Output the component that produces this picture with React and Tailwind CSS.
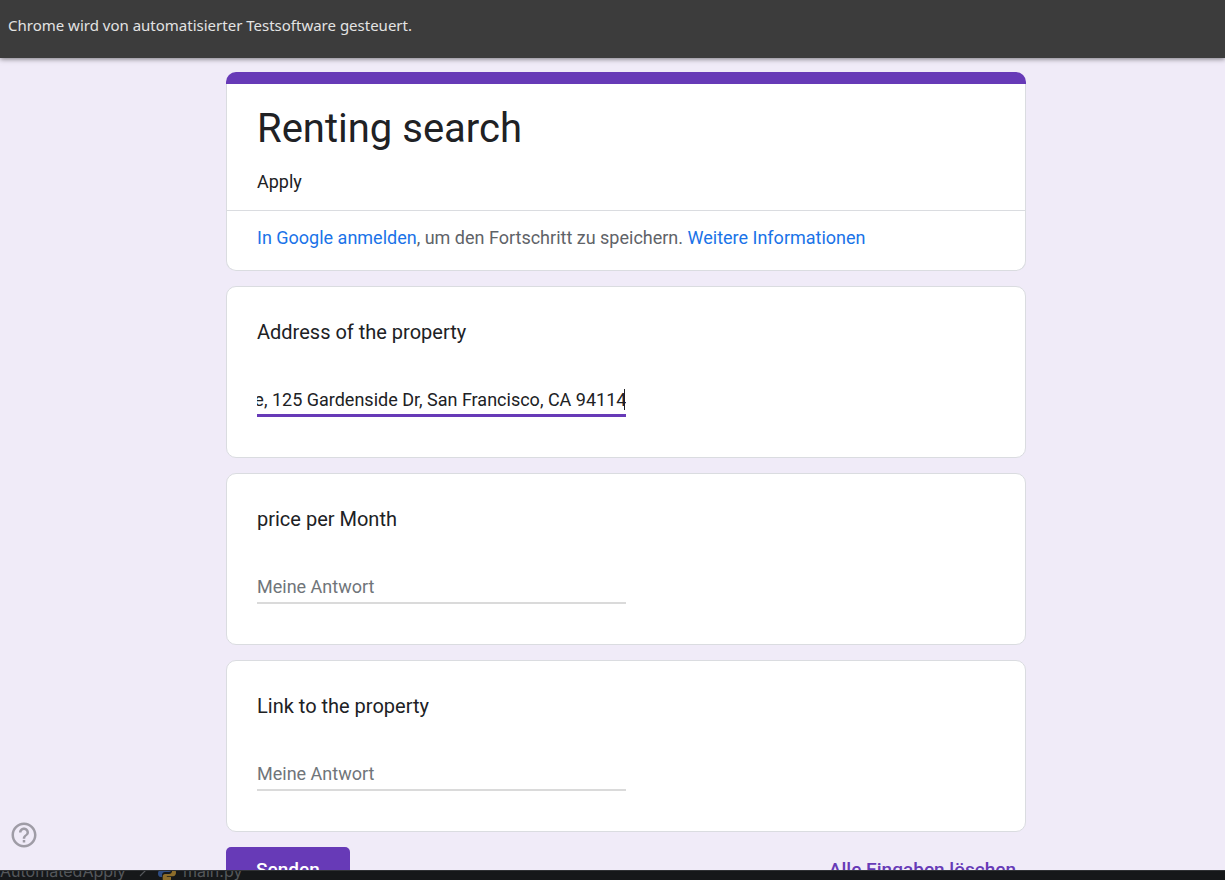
import { useEffect, useRef } from "react";

const questions = [
  { id: "address", label: "Address of the property", value: "Twin Peaks Residence, 125 Gardenside Dr, San Francisco, CA 94114" },
  { id: "price", label: "price per Month", value: "" },
  { id: "link", label: "Link to the property", value: "" },
];

function Question({ id, label, value }) {
  const field = useRef(null);

  useEffect(() => {
    const input = field.current;
    if (!value || !input) return;
    input.focus();
    input.setSelectionRange(value.length, value.length);
    input.scrollLeft = input.scrollWidth;
  }, [value]);

  return (
    <section className="rounded-[10px] border border-[#dadce0] bg-white px-[30px] pt-[30px] pb-10">
      <label htmlFor={id} className="block text-xl leading-[30px] text-[#202124]">
        {label}
      </label>
      <div className="relative mt-[37px] w-1/2">
        <input
          ref={field}
          id={id}
          type="text"
          defaultValue={value}
          placeholder="Meine Antwort"
          className="peer block h-[33px] w-full border-b-2 border-[#dadada] bg-transparent text-lg leading-[30px] text-[#202124] outline-none placeholder:text-[#70757a] focus:border-[#673ab7]"
        />
        <span className="pointer-events-none absolute inset-x-0 bottom-0 hidden h-[3px] bg-[#673ab7] peer-focus:block" />
        {value && <span className="pointer-events-none absolute top-[5px] right-px h-[21px] w-px bg-[#202124]" />}
      </div>
    </section>
  );
}

export default function App() {
  return (
    <div className="flex h-screen flex-col overflow-hidden bg-[#f0ebf8] font-['Roboto',sans-serif] text-lg text-[#202124]">
      <header className="relative z-10 flex h-[58px] shrink-0 items-center bg-[#3c3c3c] px-2 pb-2 font-['Noto_Sans','Open_Sans',sans-serif] text-[15px] leading-6 text-[#e3e3e3] shadow-[0_1px_5px_rgba(0,0,0,0.5)]">
        Chrome wird von automatisierter Testsoftware gesteuert.
      </header>

      <main className="relative min-h-0 flex-1 overflow-hidden pt-[14px] pr-4 pl-[43px]">
        <form className="mx-auto flex w-full max-w-[800px] flex-col gap-[15px]" onSubmit={(e) => e.preventDefault()}>
          <section>
            <div className="h-3 rounded-t-[10px] bg-[#673ab7]" />
            <div className="rounded-b-[10px] border border-t-0 border-[#dadce0] bg-white">
              <div className="px-[30px] pt-5 pb-[15px]">
                <h1 className="text-[40px] leading-[50px]">Renting search</h1>
                <p className="mt-[14px] leading-[27px]">Apply</p>
              </div>
              <div className="border-t border-[#dadce0] px-[30px] pt-[13px] pb-[19px] leading-[27px] text-[#5f6368]">
                <a href="#anmelden" className="text-[#1a73e8]">In Google anmelden</a>, um den Fortschritt zu speichern.{" "}
                <a href="#info" className="text-[#1a73e8]">Weitere Informationen</a>
              </div>
            </div>
          </section>

          {questions.map((q) => (
            <Question key={q.id} {...q} />
          ))}

          <div className="flex items-start justify-between pr-[10px] text-[19px] font-medium">
            <button type="submit" className="h-[45px] rounded-[5px] bg-[#673ab7] px-[30px] text-white">
              Senden
            </button>
            <button type="reset" className="h-[45px] text-[#673ab7]">
              Alle Eingaben löschen
            </button>
          </div>
        </form>

        <button type="button" aria-label="Hilfe" className="absolute bottom-5 left-[9px] text-[#9f9ca6]">
          <svg viewBox="0 0 24 24" className="size-[30px]" fill="currentColor" aria-hidden="true">
            <path d="M11 18h2v-2h-2v2zm1-16C6.48 2 2 6.48 2 12s4.48 10 10 10 10-4.480 10-10S17.520 2 12 2zm0 18c-4.410 0-8-3.590-8-8s3.590-8 8-8 8 3.590 8 8-3.590 8-8 8zm0-14c-2.210 0-4 1.790-4 4h2c0-1.100.9-2 2-2s2 .9 2 2c0 2-3 1.750-3 5h2c0-2.250 3-2.500 3-5 0-2.210-1.790-4-4-4z" />
          </svg>
        </button>
      </main>

      <footer className="flex h-[10px] shrink-0 items-end overflow-hidden border-t border-[#303235] bg-[#16181a] font-['Inter',sans-serif] text-base leading-[18px] text-[#54575b]">
        <span>AutomatedApply</span>
        <svg viewBox="0 0 8 12" className="mr-[11px] mb-[3px] ml-[13px] h-3 w-2 shrink-0" fill="none" stroke="currentColor" strokeWidth="1.2" aria-hidden="true">
          <path d="M1 1l5 5-5 5" transform="translate(7 0) scale(1 1) translate(-7 0)" />
        </svg>
        <svg viewBox="0 0 18 18" className="mr-[7px] -mb-[2px] size-[18px] shrink-0" aria-hidden="true">
          <path fill="#2f4d83" d="M9 0C5 0 5 1.700 5 2.700V5h4.200v.8H3C1 5.800 0 7.500 0 9.500S1 13 2.600 13H4v-2.200C4 9.200 5.300 8 7 8h4c1.400 0 2.300-1 2.300-2.300V2.700C13.300 1 11.800 0 9 0z" />
          <path fill="#8d6d2b" d="M9 17.500c4 0 4-1.700 4-2.700V13H8.800v-.8H15c2 0 3-1.700 3-3.700S17 5 15.400 5H14v2.200C14 8.800 12.700 10 11 10H7c-1.400 0-2.300 1-2.300 2.300v3C4.700 16.500 6.200 17.500 9 17.500z" />
        </svg>
        <span>main.py</span>
      </footer>
    </div>
  );
}
